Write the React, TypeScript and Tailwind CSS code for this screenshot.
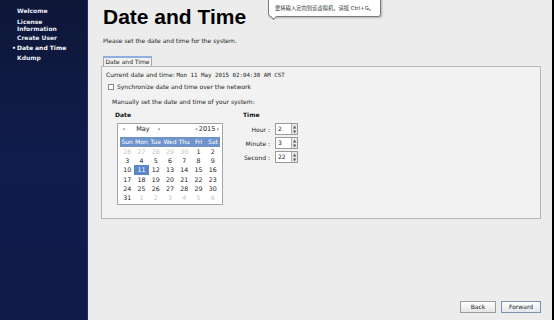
import React from "react";

const font = { fontFamily: '"DejaVu Sans", "Noto Sans CJK SC", sans-serif' };

const weeks: { d: number; muted?: boolean; sel?: boolean }[][] = [
  [{ d: 26, muted: true }, { d: 27, muted: true }, { d: 28, muted: true }, { d: 29, muted: true }, { d: 30, muted: true }, { d: 1 }, { d: 2 }],
  [{ d: 3 }, { d: 4 }, { d: 5 }, { d: 6 }, { d: 7 }, { d: 8 }, { d: 9 }],
  [{ d: 10 }, { d: 11, sel: true }, { d: 12 }, { d: 13 }, { d: 14 }, { d: 15 }, { d: 16 }],
  [{ d: 17 }, { d: 18 }, { d: 19 }, { d: 20 }, { d: 21 }, { d: 22 }, { d: 23 }],
  [{ d: 24 }, { d: 25 }, { d: 26 }, { d: 27 }, { d: 28 }, { d: 29 }, { d: 30 }],
  [{ d: 31 }, { d: 1, muted: true }, { d: 2, muted: true }, { d: 3, muted: true }, { d: 4, muted: true }, { d: 5, muted: true }, { d: 6, muted: true }],
];

function Spin({ label, value }: { label: string; value: string }) {
  return (
    <div className="flex items-center h-[12px]">
      <span className="w-[37px] text-right pr-[5px] text-[6px] text-[#222]">{label}</span>
      <div className="flex h-[12px] w-[23px] border border-[#9a9a9a] bg-white">
        <span className="flex-1 pl-[2px] text-[6px] leading-[10px] text-[#222]">{value}</span>
        <div className="flex w-[6px] flex-col border-l border-[#b0b0b0] bg-[#e8e8e8]">
          <span className="flex-1 text-[4px] leading-[5px] text-center text-[#555]">▲</span>
          <span className="flex-1 text-[4px] leading-[5px] text-center text-[#555]">▼</span>
        </div>
      </div>
    </div>
  );
}

export default function App() {
  return (
    <div className="relative flex h-[320px] w-[554px] overflow-hidden bg-[#ececec]" style={font}>
      {/* Sidebar */}
      <div className="flex w-[88px] flex-col bg-gradient-to-b from-[#0e1738] via-[#101c4c] to-[#0f1a48] pl-[17px] pt-[6px] border-r border-[#1d2d70]">
        <div className="text-[6px] font-bold leading-[10px] text-[#e8ecf5]">Welcome</div>
        <div className="text-[6px] font-bold leading-[7px] text-[#e8ecf5] mt-[1.5px]">License<br />Information</div>
        <div className="text-[6px] font-bold leading-[10px] text-[#e8ecf5] mt-[1.5px]">Create User</div>
        <div className="relative text-[6px] font-bold leading-[10px] text-white">
          <span className="absolute left-[-5px] top-0">•</span>Date and Time
        </div>
        <div className="text-[6px] font-bold leading-[10px] text-[#e8ecf5]">Kdump</div>
      </div>

      {/* Main */}
      <div className="flex flex-1 flex-col pl-[13px] pr-[11px]">
        <div className="pl-[2px] pt-[5px] text-[21px] font-bold leading-[24px] text-black" style={{ fontFamily: '"Liberation Sans", sans-serif' }}>
          Date and Time
        </div>
        <div className="pl-[2px] mt-[7px] text-[6px] leading-[9px] text-[#222]">Please set the date and time for the system.</div>

        <div className="mt-[11px] flex">
          <div className="ml-[2px] h-[10px] w-[49px] border border-b-0 border-[#a8a8a8] bg-[#f2f2f2] text-center text-[6px] leading-[8px] text-[#222] border-t-2 border-t-[#8fb0de]">
            Date and Time
          </div>
        </div>
        <div className="h-[153px] border border-[#b8b8b8] bg-[#f2f2f2] pl-[4px] pt-[3px]">
          <div className="text-[6px] leading-[9px] text-[#222]">
            Current date and time:{" "}
            <span style={{ fontFamily: '"DejaVu Sans Mono", monospace' }} className="text-[5.8px]">
              Mon 11 May 2015 02:04:38 AM CST
            </span>
          </div>
          <div className="mt-[2px] flex items-center gap-[3px] pl-[2px]">
            <div className="h-[6px] w-[6px] border border-[#8a8a8a] bg-white" />
            <span className="text-[6px] leading-[9px] text-[#222]">Synchronize date and time over the network</span>
          </div>
          <div className="mt-[6px] pl-[6px] text-[6px] leading-[9px] text-[#222]">Manually set the date and time of your system:</div>

          <div className="mt-[4px] flex pl-[9px]">
            <div className="w-[128px]">
              <div className="text-[6px] font-bold leading-[9px] text-[#111]">Date</div>
              <div className="ml-[2px] mt-[4px] w-[106px] border border-[#a5a5a5] bg-white px-[2px] pb-[2px] pt-[1px]">
                <div className="flex h-[10px] items-center text-[6.5px] text-[#222]">
                  <span className="w-[8px] text-center">‹</span>
                  <span className="ml-[3px] w-[24px] text-center">May</span>
                  <span className="w-[8px] text-center">›</span>
                  <span className="flex-1" />
                  <span>‹</span>
                  <span className="ml-[1px]">2015</span>
                  <span className="ml-[1px] mr-[1px]">›</span>
                </div>
                <div className="mt-[2px] grid h-[10px] grid-cols-7 bg-[#6f94cc] text-center text-[6px] leading-[10px] text-white">
                  {["Sun", "Mon", "Tue", "Wed", "Thu", "Fri", "Sat"].map((d) => (
                    <span key={d}>{d}</span>
                  ))}
                </div>
                <div>
                  {weeks.map((w, i) => (
                    <div key={i} className="grid h-[9.2px] grid-cols-7 text-center text-[6.3px] leading-[9.2px]">
                      {w.map((c, j) => (
                        <span
                          key={j}
                          className={
                            c.sel
                              ? "bg-[#5b86c8] text-white"
                              : c.muted
                              ? "text-[#c4c4c4]"
                              : "text-[#222]"
                          }
                        >
                          {c.d}
                        </span>
                      ))}
                    </div>
                  ))}
                </div>
              </div>
            </div>
            <div>
              <div className="text-[6px] font-bold leading-[9px] text-[#111]">Time</div>
              <div className="mt-[4px] flex flex-col gap-[2px] ml-[-5px]">
                <Spin label="Hour :" value="2" />
                <Spin label="Minute :" value="3" />
                <Spin label="Second :" value="22" />
              </div>
            </div>
          </div>
        </div>

        <div className="flex-1" />
        <div className="mb-[7px] flex justify-end gap-[5px]">
          <button className="h-[12px] w-[36px] border border-[#9c9c9c] bg-gradient-to-b from-white to-[#e6e6e6] text-[6px] leading-[10px] text-[#222]">Back</button>
          <button className="h-[12px] w-[40px] border border-[#7f8fb0] bg-gradient-to-b from-white to-[#e2e6ee] text-[6px] leading-[10px] text-[#222]">Forward</button>
        </div>
      </div>
      <div className="w-[2px] bg-black" />

      {/* Tooltip */}
      <div className="absolute left-[268px] top-[-3px] h-[20px] w-[113px] rounded-[3px] border border-[#7a7a7a] bg-white pl-[6px] pt-[3px] text-[5.3px] leading-[14px] whitespace-nowrap text-[#333] shadow-[1px_1px_2px_rgba(0,0,0,0.25)]">
        要将输入定向到该虚拟机，请按 Ctrl+G。
      </div>
      <div className="absolute left-[271px] top-[14px] h-[5px] w-[5px] rotate-45 border-b border-r border-[#7a7a7a] bg-white" />
    </div>
  );
}
